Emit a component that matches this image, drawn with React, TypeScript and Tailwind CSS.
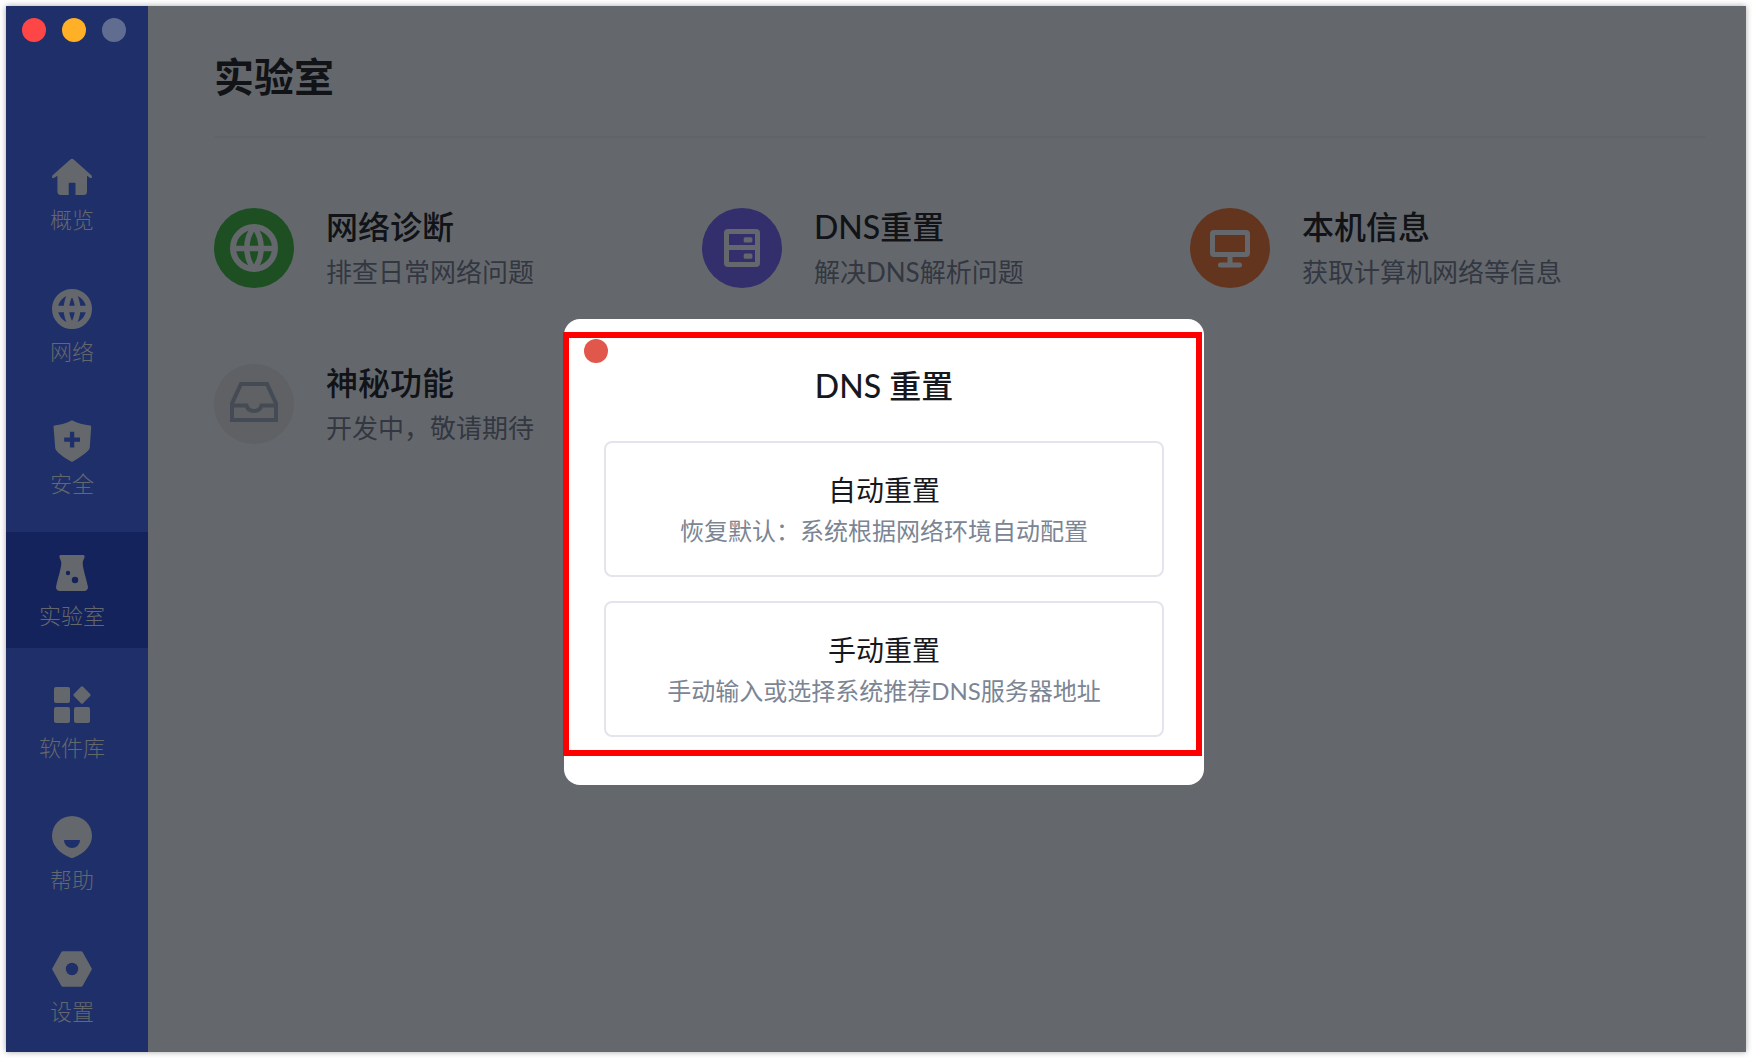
import type { ReactNode } from "react";

function GlobeIcon({ className }: { className: string }) {
  return (
    <svg viewBox="0 0 48 48" fill="none" stroke="currentColor" className={className}>
      <circle cx="24" cy="24" r="21" strokeWidth="6" />
      <path d="M24 3C14.500 14.500 14.500 33.500 24 45M24 3C33.500 14.500 33.500 33.500 24 45" strokeWidth="5.500" />
      <path d="M3 24.500H45" strokeWidth="5.500" />
    </svg>
  );
}

function NavGlobeIcon() {
  return (
    <svg viewBox="0 0 40 40" fill="none" stroke="currentColor" className="size-10">
      <circle cx="20" cy="20" r="17" strokeWidth="6" />
      <path d="M20 3C12.500 13 12.500 27 20 37M20 3C27.500 13 27.500 27 20 37" strokeWidth="5.500" />
      <path d="M3 20H37" strokeWidth="6.400" />
    </svg>
  );
}

function HomeIcon() {
  return (
    <svg viewBox="0 0 40 40" fill="currentColor" className="size-10">
      <path d="M18.300 2.600a2.600 2.600 0 0 1 3.400 0L39.400 18.200c.9.800.7 2.800-.4 2.900-.6.100-1.100-.1-1.600-.5L35 18.700V34.500a3.500 3.500 0 0 1-3.500 3.500H23.500V26.800a1 1 0 0 0-1-1h-4.800a1 1 0 0 0-1 1V38H8.900a3.500 3.500 0 0 1-3.500-3.500V18.700L2.600 20.600c-.5.400-1 .6-1.600.5-1.100-.1-1.300-2.100-.4-2.900z" />
    </svg>
  );
}

function ShieldIcon() {
  return (
    <svg viewBox="0 0 40 42" className="h-[42px] w-10">
      <path
        d="M20 .3C25.500 3.200 31.500 5 38.300 5.500c.6 0 .9.400.9 1L37.800 27c-.1 1.400-.6 2.600-1.600 3.600C32.500 34.700 25.500 39 20 42 14.500 39 7.500 34.700 4.800 31c-1-1-1.500-2.200-1.600-3.600L1.500 6.500c0-.6.400-1 .9-1C9 5 14.500 3.200 20 .3z"
        fill="currentColor"
      />
      <path d="M12.200 19.600H28M20.100 11.700V27.500" stroke="#1f2f6a" strokeWidth="4.300" />
    </svg>
  );
}

function FlaskIcon() {
  return (
    <svg viewBox="0 0 40 40" className="size-10">
      <path
        d="M8.800 2H31.200c1.400 0 1.600 1.200 1.300 2.400-.5 1.800-1.800 3.300-1.800 5.600 0 5.500 3.500 15 5.200 23.500.5 2.500-1.500 4.500-3.900 4.500H8c-2.400 0-4.400-2-3.900-4.500C5.800 25 9.300 15.500 9.300 10c0-2.300-1.300-3.800-1.800-5.600C7.200 3.200 7.400 2 8.800 2z"
        fill="currentColor"
      />
      <circle cx="16" cy="20" r="2.200" fill="#14235b" />
      <circle cx="23" cy="27" r="3.200" fill="#14235b" />
    </svg>
  );
}

function AppsIcon() {
  return (
    <svg viewBox="0 0 40 40" fill="currentColor" className="size-10">
      <rect x="2" y="2" width="16" height="16" rx="2" />
      <rect x="2" y="22" width="16" height="16" rx="2" />
      <rect x="22" y="22" width="16" height="16" rx="2" />
      <rect x="23.500" y="3.500" width="13" height="13" rx="1.500" transform="rotate(45 30 10)" />
    </svg>
  );
}

function HelpIcon() {
  return (
    <svg viewBox="0 0 40 42" className="h-[42px] w-10">
      <path d="M20 0a20 20 0 0 1 20 20c0 9.500-8 18-18.600 21.700a4 4 0 0 1-2.800 0C8 38 0 29.500 0 20A20 20 0 0 1 20 0z" fill="currentColor" />
      <path d="M12 24H28a8 8 0 0 1-16 0z" fill="#1f2f6a" />
    </svg>
  );
}

function SettingsIcon() {
  return (
    <svg viewBox="0 0 40 40" className="size-10">
      <path d="M11 2.200H29a2 2 0 0 1 1.700 1L39.500 19a2 2 0 0 1 0 2L30.700 36.800a2 2 0 0 1-1.700 1H11a2 2 0 0 1-1.700-1L.5 21a2 2 0 0 1 0-2L9.300 3.200a2 2 0 0 1 1.700-1z" fill="currentColor" />
      <circle cx="20" cy="20" r="6.200" fill="#1f2f6a" />
    </svg>
  );
}

function ServerIcon() {
  return (
    <svg viewBox="0 0 48 48" fill="none" className="size-12">
      <rect x="8.500" y="7.500" width="31" height="33" rx="1.500" stroke="currentColor" strokeWidth="5" />
      <path d="M8 23.500H40" stroke="currentColor" strokeWidth="5" />
      <rect x="25.700" y="13.200" width="8.700" height="5.200" rx="1.500" fill="currentColor" />
      <rect x="25.700" y="29.500" width="8.700" height="5.200" rx="1.500" fill="currentColor" />
    </svg>
  );
}

function MonitorIcon() {
  return (
    <svg viewBox="0 0 48 48" fill="none" stroke="currentColor" strokeWidth="5" className="size-12">
      <rect x="6.500" y="8.500" width="35" height="22" rx="1.500" />
      <path d="M24 31V41" />
      <path d="M14.500 41H33.500" strokeLinecap="round" />
    </svg>
  );
}

function InboxIcon() {
  return (
    <svg viewBox="0 0 48 48" fill="none" stroke="currentColor" strokeWidth="4" className="size-12">
      <path d="M2 23.500V40H46V23.500L37 4H11z" />
      <path d="M2 25.500H16.500C17.500 29.500 20.500 31 24 31s6.500-1.500 7.500-5.500H46" />
    </svg>
  );
}

const navItems = [
  { label: "概览", icon: <HomeIcon /> },
  { label: "网络", icon: <NavGlobeIcon /> },
  { label: "安全", icon: <ShieldIcon /> },
  { label: "实验室", icon: <FlaskIcon />, active: true },
  { label: "软件库", icon: <AppsIcon /> },
  { label: "帮助", icon: <HelpIcon /> },
  { label: "设置", icon: <SettingsIcon /> },
];

const tools = [
  { title: "网络诊断", desc: "排查日常网络问题", color: "bg-[#1d4f22] text-[#64686c]", icon: <GlobeIcon className="size-12" /> },
  { title: "DNS重置", desc: "解决DNS解析问题", color: "bg-[#332e6c] text-[#64686c]", icon: <ServerIcon /> },
  { title: "本机信息", desc: "获取计算机网络等信息", color: "bg-[#64351e] text-[#64686c]", icon: <MonitorIcon /> },
  { title: "神秘功能", desc: "开发中，敬请期待", color: "bg-[#5f6165] text-[#454b54]", icon: <InboxIcon /> },
];

const resetOptions = [
  { title: "自动重置", desc: "恢复默认：系统根据网络环境自动配置" },
  { title: "手动重置", desc: "手动输入或选择系统推荐DNS服务器地址" },
];

function NavItem({ label, icon, active }: { label: string; icon: ReactNode; active?: boolean }) {
  return (
    <a
      href="#"
      className={`flex h-[116px] flex-col items-center gap-2 pt-[21px] pr-[10px] text-[#64686c] ${active ? "bg-[#14235b]" : ""}`}
    >
      <span className="flex h-10 items-center justify-center">{icon}</span>
      <span className="text-[22px] leading-[30px] font-light">{label}</span>
    </a>
  );
}

function Sidebar() {
  return (
    <aside className="w-[142px] shrink-0 bg-[#1f2f6a] pb-2">
      <div className="flex gap-4 px-4 pt-3">
        <button aria-label="关闭" className="size-6 rounded-full bg-[#ff4647]" />
        <button aria-label="最小化" className="size-6 rounded-full bg-[#ffb026]" />
        <button aria-label="缩放" className="size-6 rounded-full bg-[#606d91]" />
      </div>
      <nav className="mt-[94px] flex flex-col gap-4">
        {navItems.map((item) => (
          <NavItem key={item.label} {...item} />
        ))}
      </nav>
    </aside>
  );
}

function ResetDialog() {
  return (
    <div className="absolute inset-0 flex items-center justify-center pt-[46px] pl-4">
      <div role="dialog" aria-label="DNS 重置" className="relative w-[640px] rounded-2xl bg-white px-10 pt-5 pb-12">
        <button aria-label="关闭" className="-ml-5 block size-6 rounded-full bg-[#e2574c]" />
        <h2 className="text-center text-[32px] leading-[46px] font-medium text-[#17181d]">DNS 重置</h2>
        <div className="mt-8 flex flex-col gap-6">
          {resetOptions.map((option) => (
            <button key={option.title} className="flex h-[136px] flex-col items-center justify-center rounded-lg border-2 border-[#e4e4ec] pt-0.5">
              <span className="text-[28px] leading-[42px] text-[#17181d]">{option.title}</span>
              <span className="text-2xl leading-10 text-[#7b8593]">{option.desc}</span>
            </button>
          ))}
        </div>
        {/* highlight frame */}
        <div className="pointer-events-none absolute top-[13px] right-0.5 bottom-[29px] -left-px border-6 border-[#ff0000]" />
      </div>
    </div>
  );
}

export default function App() {
  return (
    <div className="flex min-h-screen bg-white p-1.5 font-[Lato,'Noto_Sans_CJK_SC',sans-serif]">
      <div className="relative flex flex-1 shadow-[0_0_6px_rgba(0,0,0,0.35)]">
        <Sidebar />
        <main className="flex-1 bg-[#64686c] pr-10 pl-[66px]">
          <h1 className="border-b-2 border-[#616469] pt-[41px] pb-[29px] text-[40px] leading-[60px] font-bold text-[#111317]">实验室</h1>
          <div className="mt-[70px] mr-7 grid grid-cols-3 gap-y-[76px]">
            {tools.map((tool) => (
              <a key={tool.title} href="#" className="flex h-20 items-center gap-8">
                <span className={`flex size-20 shrink-0 items-center justify-center rounded-full ${tool.color}`}>{tool.icon}</span>
                <span className="flex flex-col whitespace-nowrap">
                  <span className="text-[32px] leading-[48px] font-medium text-[#111317]">{tool.title}</span>
                  <span className="text-[26px] leading-[42px] text-[#333741]">{tool.desc}</span>
                </span>
              </a>
            ))}
          </div>
        </main>
        <ResetDialog />
      </div>
    </div>
  );
}
